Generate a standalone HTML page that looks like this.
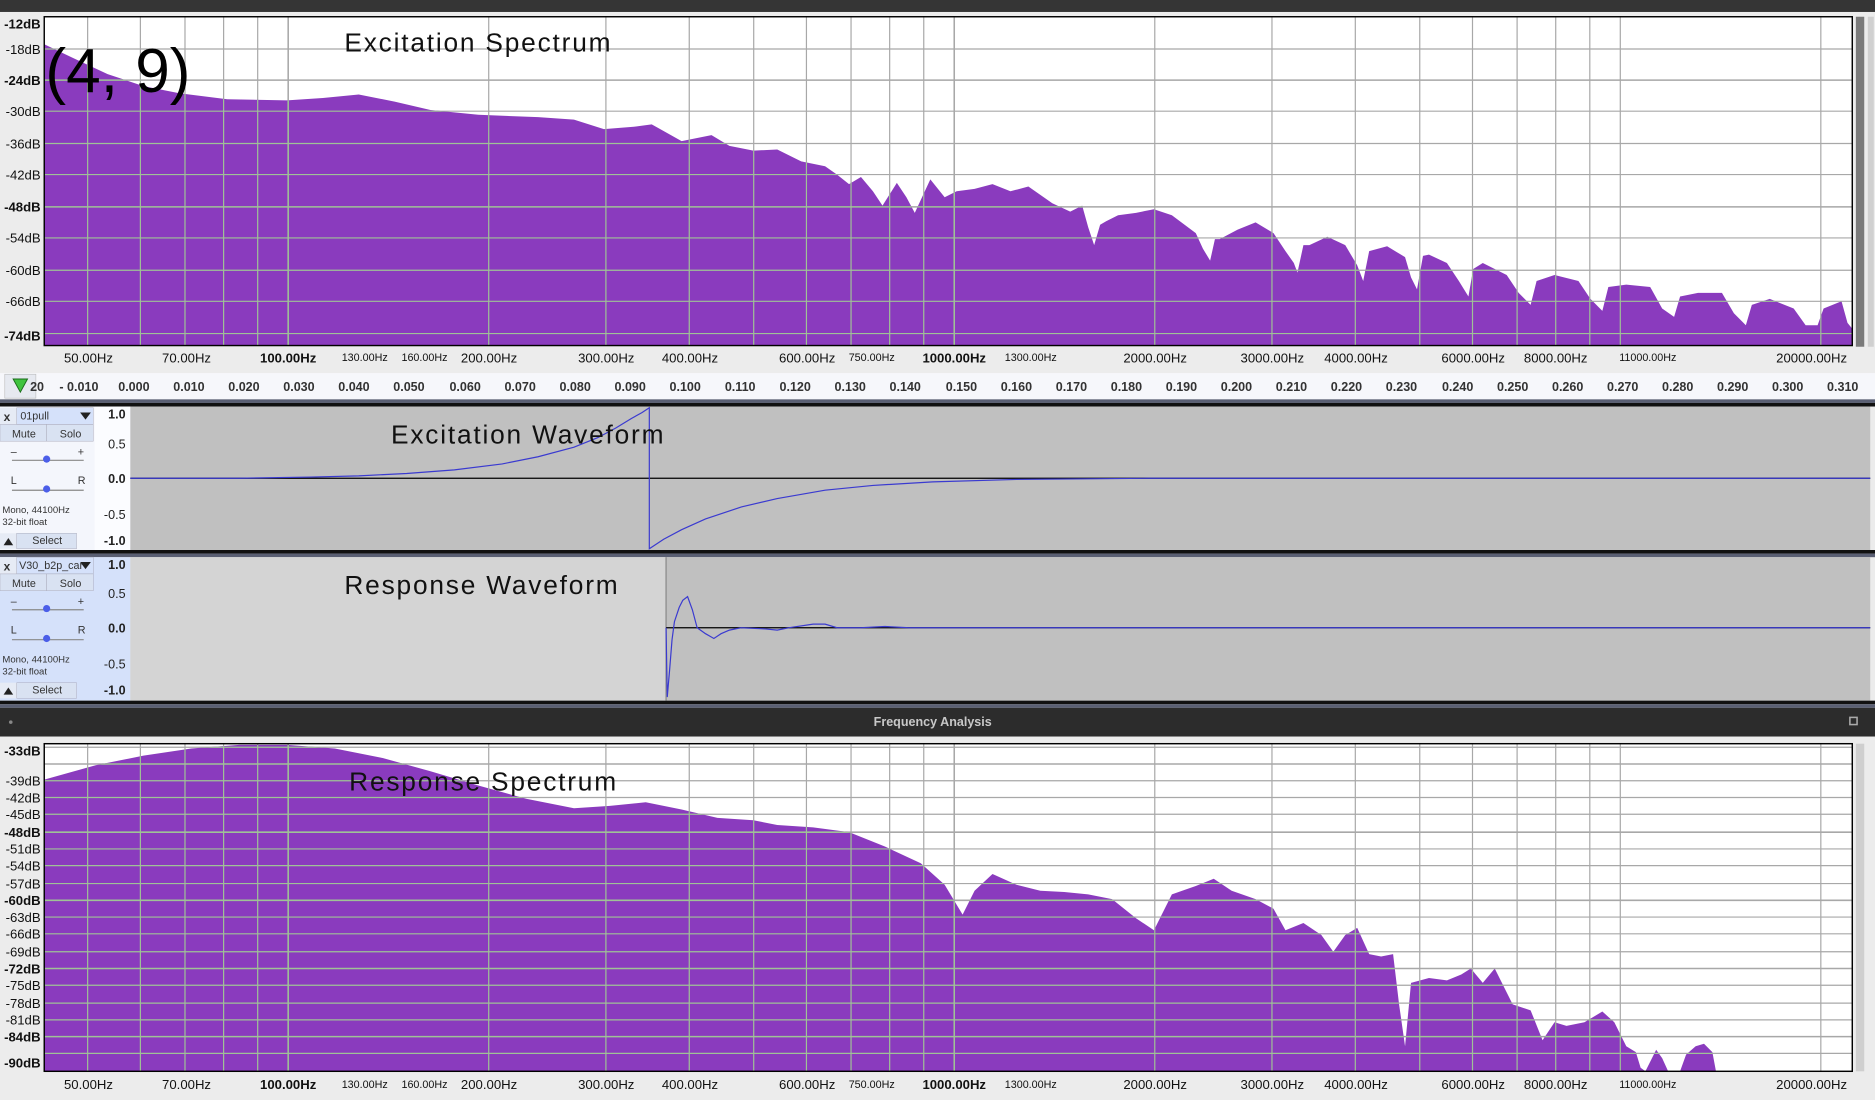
<!DOCTYPE html>
<html><head><meta charset="utf-8"><style>html,body{margin:0;padding:0;background:#ececec;overflow:hidden}svg{display:block}</style></head>
<body>
<svg xmlns="http://www.w3.org/2000/svg" width="1875" height="1100" viewBox="0 0 1568 920" preserveAspectRatio="none" font-family="'Liberation Sans','DejaVu Sans',sans-serif">
<defs>
<polygon id="sp1" points="37,37 60,48 90,62 120,72 150,78 190,83 240,84 270,82 300,79 330,85 360,92 400,96 450,98 480,100 505,108 530,106 545,104 570,118 595,113 610,122 630,126 650,125 670,135 690,139 700,146 710,154 720,148 730,160 738,172 750,153 758,165 765,178 778,150 790,165 800,160 815,158 830,154 845,160 860,156 880,170 895,177 905,172 910,190 915,205 920,188 925,185 935,180 950,178 965,175 980,180 1000,195 1006,208 1012,218 1016,200 1020,200 1035,192 1050,186 1065,195 1075,210 1082,220 1085,228 1090,205 1095,205 1110,198 1125,205 1135,222 1140,235 1145,210 1160,206 1175,215 1180,232 1185,242 1190,214 1195,213 1210,220 1220,235 1228,248 1232,225 1240,220 1260,230 1270,245 1280,255 1285,235 1300,230 1320,235 1330,250 1340,260 1345,240 1360,238 1380,240 1390,258 1400,265 1405,248 1420,245 1440,245 1450,262 1460,272 1465,255 1480,250 1500,258 1510,272 1520,272 1525,258 1540,252 1545,270 1549,275 1549,289 37,289"/>
<polygon id="sp2" points="37,652 80,640 120,632 160,626 200,623 240,623 280,626 320,634 360,645 400,657 440,668 480,676 510,674 540,671 570,677 600,684 630,686 650,690 680,692 710,696 740,708 770,722 790,740 805,765 815,745 830,731 850,740 870,745 890,746 910,748 930,752 950,768 965,778 980,748 1000,741 1015,735 1030,745 1050,752 1065,760 1075,778 1090,772 1105,782 1115,796 1125,782 1135,776 1145,798 1155,800 1165,798 1170,840 1175,875 1180,822 1195,818 1210,820 1222,815 1230,810 1240,822 1250,810 1265,840 1280,845 1290,870 1300,855 1310,858 1325,855 1340,846 1350,855 1360,875 1368,880 1372,893 1376,896 1385,878 1390,885 1395,896 1405,896 1410,882 1418,875 1425,873 1432,880 1435,896 37,896"/>
<clipPath id="c1"><use href="#sp1"/></clipPath>
<clipPath id="c2"><use href="#sp2"/></clipPath>
<g id="vg1" stroke-width="1">
<path d="M73.3 14V289M117.4 14V289M154.7 14V289M187 14V289M215.5 14V289M408.7 14V289M506.7 14V289M576.4 14V289M630.3 14V289M674.4 14V289M711.7 14V289M744 14V289M772.5 14V289M965.7 14V289M1063.7 14V289M1133.4 14V289M1187.3 14V289M1231.4 14V289M1268.7 14V289M1301 14V289M1329.5 14V289M1355 14V289M1522.7 14V289M37 41H1549M37 93H1549M37 120H1549M37 146H1549M37 199H1549M37 226H1549M37 252H1549M37 279H1549"/>
<path stroke-width="1.3" d="M241 14V289M798 14V289M37 67H1549M37 173H1549"/>
</g>
<g id="vg2" stroke-width="1">
<path d="M73.3 622V896M117.4 622V896M154.7 622V896M187 622V896M215.5 622V896M408.7 622V896M506.7 622V896M576.4 622V896M630.3 622V896M674.4 622V896M711.7 622V896M744 622V896M772.5 622V896M965.7 622V896M1063.7 622V896M1133.4 622V896M1187.3 622V896M1231.4 622V896M1268.7 622V896M1301 622V896M1329.5 622V896M1355 622V896M1522.7 622V896M37 625H1549M37 653H1549M37 667H1549M37 681H1549M37 710H1549M37 724H1549M37 739H1549M37 767H1549M37 781H1549M37 796H1549M37 824H1549M37 839H1549M37 853H1549M37 881H1549"/>
<path stroke-width="1.3" d="M241 622V896M798 622V896M37 639H1549M37 696H1549M37 753H1549M37 810H1549M37 867H1549"/>
</g>
</defs>
<rect width="1568" height="920" fill="#ececec"/>
<rect width="1568" height="10" fill="#353535"/>
<rect x="37" y="14" width="1512" height="275" fill="#fff"/>
<use href="#vg1" stroke="#a8a8a8"/>
<use href="#sp1" fill="#8a3bbe"/>
<use href="#vg1" stroke="#9fc296" clip-path="url(#c1)"/>
<rect x="37" y="14" width="1512" height="275" fill="none" stroke="#000" stroke-width="1.2"/>
<rect x="1552" y="14" width="7" height="276" fill="#7a7a7a"/>
<rect x="1562" y="14" width="5" height="276" fill="#d0d0d0"/>
<g font-size="11" text-anchor="end" fill="#111">
<text x="34" y="24" font-weight="bold">-12dB</text><text x="34" y="45">-18dB</text><text x="34" y="71" font-weight="bold">-24dB</text><text x="34" y="97">-30dB</text><text x="34" y="124">-36dB</text><text x="34" y="150">-42dB</text><text x="34" y="177" font-weight="bold">-48dB</text><text x="34" y="203">-54dB</text><text x="34" y="230">-60dB</text><text x="34" y="256">-66dB</text><text x="34" y="285" font-weight="bold">-74dB</text>
</g>
<g font-size="11" text-anchor="middle" fill="#111">
<text x="74" y="303">50.00Hz</text><text x="156" y="303">70.00Hz</text><text x="241" y="303" font-weight="bold">100.00Hz</text><text x="305" y="302" font-size="9">130.00Hz</text><text x="355" y="302" font-size="9">160.00Hz</text><text x="409" y="303">200.00Hz</text><text x="507" y="303">300.00Hz</text><text x="577" y="303">400.00Hz</text><text x="675" y="303">600.00Hz</text><text x="729" y="302" font-size="9">750.00Hz</text><text x="798" y="303" font-weight="bold">1000.00Hz</text><text x="862" y="302" font-size="9">1300.00Hz</text><text x="966" y="303">2000.00Hz</text><text x="1064" y="303">3000.00Hz</text><text x="1134" y="303">4000.00Hz</text><text x="1232" y="303">6000.00Hz</text><text x="1301" y="303">8000.00Hz</text><text x="1378" y="302" font-size="9">11000.00Hz</text><text x="1515" y="303">20000.00Hz</text>
</g>
<text x="288" y="43" font-size="22" letter-spacing="1.5" fill="#111">Excitation Spectrum</text>
<text x="38" y="77" font-size="52" fill="#000">(4, 9)</text>
<rect x="0" y="312" width="1568" height="22" fill="#f6f7fb"/>
<rect x="4" y="313" width="26" height="20" fill="#e6e9f0" stroke="#bbb" stroke-width="0.5"/>
<polygon points="11,317 23,317 17,328" fill="#3fc43f" stroke="#1a6a1a" stroke-width="0.8"/>
<g font-size="10.5" font-weight="bold" fill="#333" text-anchor="middle">
<text x="31" y="327">20</text><text x="66" y="327">- 0.010</text><text x="112" y="327">0.000</text><text x="158" y="327">0.010</text><text x="204" y="327">0.020</text><text x="250" y="327">0.030</text><text x="296" y="327">0.040</text><text x="342" y="327">0.050</text><text x="389" y="327">0.060</text><text x="435" y="327">0.070</text><text x="481" y="327">0.080</text><text x="527" y="327">0.090</text><text x="573" y="327">0.100</text><text x="619" y="327">0.110</text><text x="665" y="327">0.120</text><text x="711" y="327">0.130</text><text x="757" y="327">0.140</text><text x="804" y="327">0.150</text><text x="850" y="327">0.160</text><text x="896" y="327">0.170</text><text x="942" y="327">0.180</text><text x="988" y="327">0.190</text><text x="1034" y="327">0.200</text><text x="1080" y="327">0.210</text><text x="1126" y="327">0.220</text><text x="1172" y="327">0.230</text><text x="1219" y="327">0.240</text><text x="1265" y="327">0.250</text><text x="1311" y="327">0.260</text><text x="1357" y="327">0.270</text><text x="1403" y="327">0.280</text><text x="1449" y="327">0.290</text><text x="1495" y="327">0.300</text><text x="1541" y="327">0.310</text>
</g>
<rect x="0" y="334" width="1568" height="3" fill="#5a5f73"/>
<rect x="0" y="337" width="1568" height="3" fill="#111"/>
<rect x="0" y="340" width="79" height="120" fill="#f4f6fc"/>
<rect x="79" y="340" width="30" height="120" fill="#fbfcff"/>
<rect x="109" y="340" width="1455" height="120" fill="#c0c0c0"/>
<line x1="109" y1="400" x2="1564" y2="400" stroke="#000" stroke-width="1"/>
<polyline fill="none" stroke="#3a3ad0" stroke-width="1" points="109,400 200,400 260,399 300,398 340,396 380,393 420,388 450,382 480,374 500,366 515,358 528,350 537,345 543,341 543,459 555,451 570,443 590,434 620,424 650,417 690,410 730,406 780,403 850,401 960,400 1564,400"/>
<rect x="0" y="460" width="1568" height="3" fill="#111"/><rect x="0" y="463" width="1568" height="3" fill="#5a5f73"/>
<rect x="0" y="466" width="79" height="120" fill="#d5e1fa"/>
<rect x="79" y="466" width="30" height="120" fill="#d5e1fa"/>
<rect x="109" y="466" width="448" height="120" fill="#d4d4d4"/>
<rect x="557" y="466" width="1007" height="120" fill="#c0c0c0"/>
<line x1="557" y1="466" x2="557" y2="586" stroke="#888"/>
<line x1="557" y1="525" x2="1564" y2="525" stroke="#000"/>
<polyline fill="none" stroke="#3a3ad0" stroke-width="1" points="557,525 558,583 560,560 562,535 564,520 568,508 571,502 575,499 579,510 583,525 590,530 597,534 603,530 610,527 620,525 640,526 650,527 660,525 680,522 690,522 700,525 720,525 740,524 760,525 1564,525"/>
<g font-size="9" fill="#333">
<rect x="0" y="341" width="14" height="14" fill="#e6ebf5"/><text x="3" y="352" font-weight="bold" font-size="10">x</text>
<rect x="14" y="341" width="64" height="14" fill="#d5e1fa" stroke="#aab" stroke-width="0.4"/><text x="17" y="351">01pull</text><polygon points="67,345 76,345 71.5,351" fill="#222"/>
<rect x="0" y="355" width="39" height="14" fill="#d9e2f2" stroke="#aab" stroke-width="0.4"/><text x="10" y="366">Mute</text>
<rect x="39" y="355" width="39" height="14" fill="#d9e2f2" stroke="#aab" stroke-width="0.4"/><text x="50" y="366">Solo</text>
<text x="9" y="381">–</text><text x="65" y="381">+</text><line x1="10" y1="385" x2="70" y2="385" stroke="#888"/><circle cx="39" cy="384" r="3" fill="#4b5ee8"/>
<text x="9" y="405">L</text><text x="65" y="405">R</text><line x1="10" y1="410" x2="70" y2="410" stroke="#888"/><circle cx="39" cy="409" r="3" fill="#4b5ee8"/>
<text x="2" y="429" font-size="8">Mono, 44100Hz</text><text x="2" y="439" font-size="8">32-bit float</text>
<rect x="0" y="446" width="14" height="13" fill="#e6ebf5"/><polygon points="3,456 11,456 7,450" fill="#222"/>
<rect x="14" y="446" width="50" height="13" fill="#d9e2f2" stroke="#aab" stroke-width="0.4"/><text x="27" y="455">Select</text>
</g>
<g font-size="9" fill="#333">
<rect x="0" y="466" width="14" height="14" fill="#e6ebf5"/><text x="3" y="477" font-weight="bold" font-size="10">x</text>
<rect x="14" y="466" width="64" height="14" fill="#d5e1fa" stroke="#aab" stroke-width="0.4"/><text x="16" y="476">V30_b2p_car</text><polygon points="67,470 76,470 71.5,476" fill="#222"/>
<rect x="0" y="480" width="39" height="14" fill="#d9e2f2" stroke="#aab" stroke-width="0.4"/><text x="10" y="491">Mute</text>
<rect x="39" y="480" width="39" height="14" fill="#d9e2f2" stroke="#aab" stroke-width="0.4"/><text x="50" y="491">Solo</text>
<text x="9" y="506">–</text><text x="65" y="506">+</text><line x1="10" y1="510" x2="70" y2="510" stroke="#888"/><circle cx="39" cy="509" r="3" fill="#4b5ee8"/>
<text x="9" y="530">L</text><text x="65" y="530">R</text><line x1="10" y1="535" x2="70" y2="535" stroke="#888"/><circle cx="39" cy="534" r="3" fill="#4b5ee8"/>
<text x="2" y="554" font-size="8">Mono, 44100Hz</text><text x="2" y="564" font-size="8">32-bit float</text>
<rect x="0" y="571" width="14" height="13" fill="#e6ebf5"/><polygon points="3,581 11,581 7,575" fill="#222"/>
<rect x="14" y="571" width="50" height="13" fill="#d9e2f2" stroke="#aab" stroke-width="0.4"/><text x="27" y="580">Select</text>
</g>
<g font-size="10.5" text-anchor="end" fill="#222">
<text x="105" y="350" font-weight="bold">1.0</text><text x="105" y="375">0.5</text><text x="105" y="404" font-weight="bold">0.0</text><text x="105" y="434">-0.5</text><text x="105" y="456" font-weight="bold">-1.0</text>
<text x="105" y="476" font-weight="bold">1.0</text><text x="105" y="500">0.5</text><text x="105" y="529" font-weight="bold">0.0</text><text x="105" y="559">-0.5</text><text x="105" y="581" font-weight="bold">-1.0</text>
</g>
<text x="327" y="371" font-size="22" letter-spacing="1.5" fill="#111">Excitation Waveform</text>
<text x="288" y="497" font-size="22" letter-spacing="1.5" fill="#111">Response Waveform</text>
<rect x="0" y="586" width="1568" height="3" fill="#111"/><rect x="0" y="589" width="1568" height="3" fill="#5a5f73"/>
<rect x="0" y="592" width="1568" height="24" fill="#2c2c2c"/>
<circle cx="9" cy="604" r="1.5" fill="#888"/>
<text x="780" y="607" font-size="10.5" font-weight="bold" fill="#c8c8c8" text-anchor="middle">Frequency Analysis</text>
<rect x="1547" y="600" width="6" height="6" fill="none" stroke="#aaa" stroke-width="1.3"/>
<rect x="37" y="622" width="1512" height="274" fill="#fff"/>
<use href="#vg2" stroke="#a8a8a8"/>
<use href="#sp2" fill="#8a3bbe"/>
<use href="#vg2" stroke="#9fc296" clip-path="url(#c2)"/>
<rect x="37" y="622" width="1512" height="274" fill="none" stroke="#000" stroke-width="1.2"/>
<rect x="1552" y="622" width="7" height="274" fill="#cfcfcf"/>
<g font-size="11" text-anchor="end" fill="#111">
<text x="34" y="632" font-weight="bold">-33dB</text><text x="34" y="657">-39dB</text><text x="34" y="671">-42dB</text><text x="34" y="685">-45dB</text><text x="34" y="700" font-weight="bold">-48dB</text><text x="34" y="714">-51dB</text><text x="34" y="728">-54dB</text><text x="34" y="743">-57dB</text><text x="34" y="757" font-weight="bold">-60dB</text><text x="34" y="771">-63dB</text><text x="34" y="785">-66dB</text><text x="34" y="800">-69dB</text><text x="34" y="814" font-weight="bold">-72dB</text><text x="34" y="828">-75dB</text><text x="34" y="843">-78dB</text><text x="34" y="857">-81dB</text><text x="34" y="871" font-weight="bold">-84dB</text><text x="34" y="893" font-weight="bold">-90dB</text>
</g>
<g font-size="11" text-anchor="middle" fill="#111">
<text x="74" y="911">50.00Hz</text><text x="156" y="911">70.00Hz</text><text x="241" y="911" font-weight="bold">100.00Hz</text><text x="305" y="910" font-size="9">130.00Hz</text><text x="355" y="910" font-size="9">160.00Hz</text><text x="409" y="911">200.00Hz</text><text x="507" y="911">300.00Hz</text><text x="577" y="911">400.00Hz</text><text x="675" y="911">600.00Hz</text><text x="729" y="910" font-size="9">750.00Hz</text><text x="798" y="911" font-weight="bold">1000.00Hz</text><text x="862" y="910" font-size="9">1300.00Hz</text><text x="966" y="911">2000.00Hz</text><text x="1064" y="911">3000.00Hz</text><text x="1134" y="911">4000.00Hz</text><text x="1232" y="911">6000.00Hz</text><text x="1301" y="911">8000.00Hz</text><text x="1378" y="910" font-size="9">11000.00Hz</text><text x="1515" y="911">20000.00Hz</text>
</g>
<text x="292" y="661" font-size="22" letter-spacing="1.5" fill="#111">Response Spectrum</text>
</svg>
</body></html>
